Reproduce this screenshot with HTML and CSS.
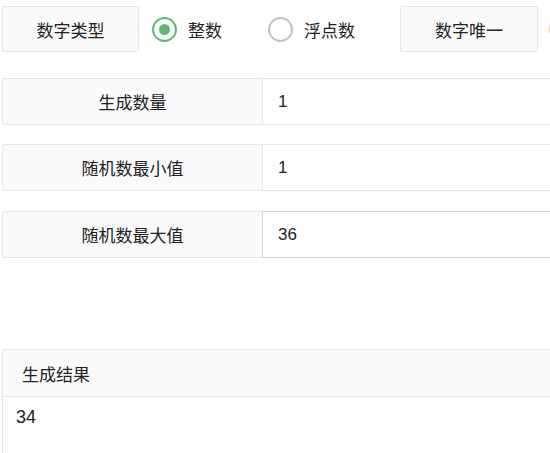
FILE: index.html
```html
<!DOCTYPE html>
<html lang="zh-CN">
<head>
<meta charset="utf-8">
<title>随机数生成</title>
<link rel="stylesheet" href="styles.css">
</head>
<body>
<div class="page">
  <div class="top">
    <div class="tag">数字类型</div>
    <label class="radio on"><span class="ring"></span><span class="rtext">整数</span></label>
    <label class="radio"><span class="ring"></span><span class="rtext">浮点数</span></label>
    <div class="tag tag2">数字唯一</div>
    <span class="extra"></span>
  </div>

  <div class="row">
    <div class="label">生成数量</div>
    <div class="input">1</div>
  </div>
  <div class="row">
    <div class="label">随机数最小值</div>
    <div class="input">1</div>
  </div>
  <div class="row last">
    <div class="label">随机数最大值</div>
    <div class="input hover">36</div>
  </div>

  <div class="result">
    <div class="result-head">生成结果</div>
    <div class="result-body">34</div>
  </div>
</div>
</body>
</html>
```

FILE: styles.css
```css
html, body {
  margin: 0;
  padding: 0;
  background: #fff;
  overflow: hidden;
}
body {
  font-family: "Liberation Sans", "Noto Sans CJK SC", sans-serif;
  font-size: 17px;
  color: #222;
}
.page {
  width: 640px;
  padding: 6px 0 0 2px;
}
.top {
  display: flex;
  align-items: center;
  height: 46px;
}
.tag {
  box-sizing: border-box;
  width: 137px;
  height: 46px;
  border: 1px solid #e6e6e6;
  border-radius: 2px;
  background: #fafafa;
  display: flex;
  align-items: center;
  justify-content: center;
  flex: none;
}
.tag2 {
  width: 138px;
  margin-left: 45px;
}
.radio {
  display: flex;
  align-items: center;
  margin-left: 13px;
}
.radio + .radio {
  margin-left: 46px;
}
.ring {
  box-sizing: border-box;
  width: 25px;
  height: 25px;
  border-radius: 50%;
  border: 2px solid #c2c2c2;
  display: flex;
  align-items: center;
  justify-content: center;
}
.radio.on .ring {
  border-color: #5fb878;
}
.radio.on .ring::after {
  content: "";
  width: 11px;
  height: 11px;
  border-radius: 50%;
  background: #5fb878;
}
.rtext {
  margin-left: 11px;
}
.extra {
  box-sizing: border-box;
  flex: none;
  width: 22px;
  height: 22px;
  margin-left: 11px;
  border-radius: 50%;
  border: 2px solid #d6cf6a;
}
.row {
  display: flex;
  height: 47px;
  margin-top: 19px;
}
.top + .row {
  margin-top: 26px;
}
.row.last {
  margin-top: 20px;
}
.label {
  box-sizing: border-box;
  width: 261px;
  height: 47px;
  border: 1px solid #e6e6e6;
  border-radius: 2px 0 0 2px;
  background: #fafafa;
  display: flex;
  align-items: center;
  justify-content: center;
  flex: none;
}
.input {
  box-sizing: border-box;
  flex: 1;
  height: 47px;
  border: 1px solid #e6e6e6;
  margin-left: -1px;
  display: flex;
  align-items: center;
  padding-left: 15px;
}
.input.hover {
  border-color: #d2d2d2;
}
.result {
  margin-top: 91px;
  border: 1px solid #e6e6e6;
  border-radius: 2px;
}
.result-head {
  height: 47px;
  box-sizing: border-box;
  background: #fafafa;
  border-bottom: 1px solid #e6e6e6;
  display: flex;
  align-items: center;
  padding-left: 19px;
}
.result-body {
  padding: 10px 13px;
  min-height: 80px;
  font-size: 18px;
}
```
